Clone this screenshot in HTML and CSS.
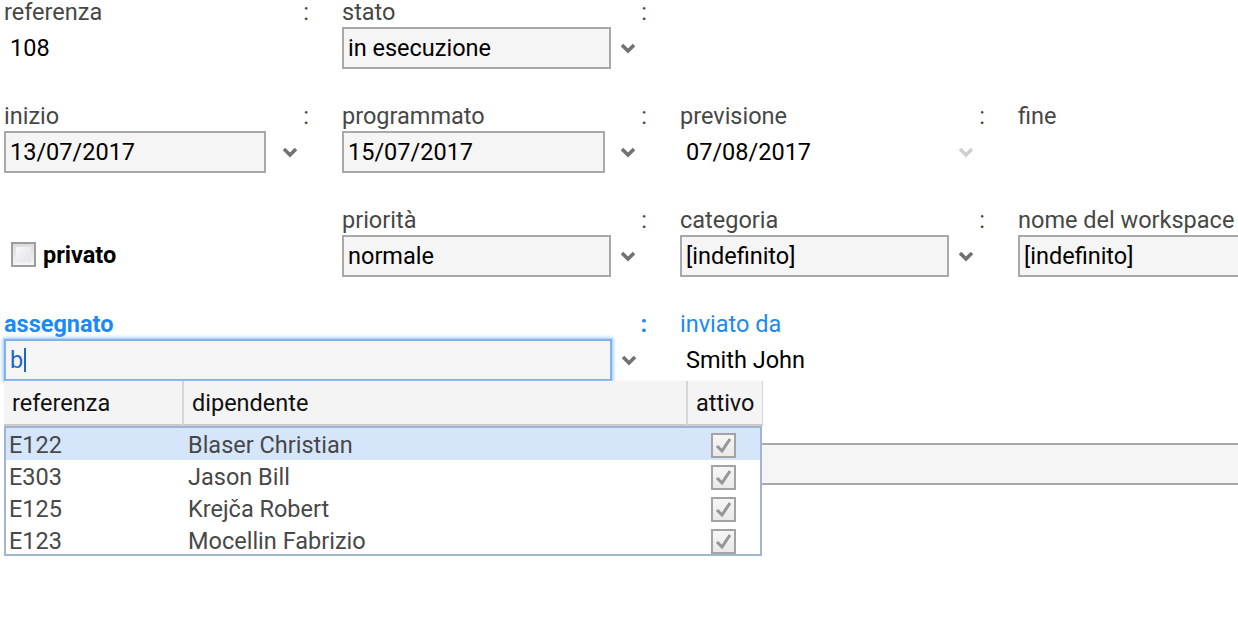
FILE: index.html
```html
<!DOCTYPE html>
<html lang="it">
<head>
<meta charset="utf-8">
<title>Attività</title>
<link rel="stylesheet" href="styles.css">
</head>
<body>
<div class="form">
  <div class="row">
    <div class="cell">
      <div class="lbl"><span>referenza</span><span>:</span></div>
      <div class="field"><span class="value">108</span></div>
    </div>
    <div class="cell">
      <div class="lbl"><span>stato</span><span>:</span></div>
      <div class="field"><div class="input w269">in esecuzione</div><svg class="chev" width="16" height="11" viewBox="0 0 16 11"><polyline points="2,2 8,8 14,2"/></svg></div>
    </div>
  </div>

  <div class="row">
    <div class="cell">
      <div class="lbl"><span>inizio</span><span>:</span></div>
      <div class="field"><div class="input w262">13/07/2017</div><svg class="chev" width="16" height="11" viewBox="0 0 16 11"><polyline points="2,2 8,8 14,2"/></svg></div>
    </div>
    <div class="cell">
      <div class="lbl"><span>programmato</span><span>:</span></div>
      <div class="field"><div class="input w263">15/07/2017</div><svg class="chev" width="16" height="11" viewBox="0 0 16 11"><polyline points="2,2 8,8 14,2"/></svg></div>
    </div>
    <div class="cell">
      <div class="lbl"><span>previsione</span><span>:</span></div>
      <div class="field"><span class="value">07/08/2017</span><svg class="chev light" width="16" height="11" viewBox="0 0 16 11"><polyline points="2,2 8,8 14,2"/></svg></div>
    </div>
    <div class="cell last">
      <div class="lbl"><span>fine</span></div>
    </div>
  </div>

  <div class="row">
    <div class="cell">
      <div class="lbl"></div>
      <div class="field check-field"><span class="cbox"><span class="cbox-in"></span></span><span class="check-label">privato</span></div>
    </div>
    <div class="cell">
      <div class="lbl"><span>priorità</span><span>:</span></div>
      <div class="field"><div class="input w269">normale</div><svg class="chev" width="16" height="11" viewBox="0 0 16 11"><polyline points="2,2 8,8 14,2"/></svg></div>
    </div>
    <div class="cell">
      <div class="lbl"><span>categoria</span><span>:</span></div>
      <div class="field"><div class="input w269">[indefinito]</div><svg class="chev" width="16" height="11" viewBox="0 0 16 11"><polyline points="2,2 8,8 14,2"/></svg></div>
    </div>
    <div class="cell last">
      <div class="lbl"><span>nome del workspace</span></div>
      <div class="field"><div class="input open">[indefinito]</div></div>
    </div>
  </div>

  <div class="row row-top">
    <div class="cell span2">
      <div class="lbl active"><span>assegnato</span><span>:</span></div>
      <div class="field"><div class="input focused w608"><span class="typed">b</span><span class="caret"></span></div><svg class="chev" width="16" height="11" viewBox="0 0 16 11"><polyline points="2,2 8,8 14,2"/></svg></div>
      <div class="dropdown">
        <div class="dd-head">
          <div class="dd-h">referenza</div>
          <div class="dd-h sep">dipendente</div>
          <div class="dd-h sep">attivo</div>
        </div>
        <div class="dd-body">
          <div class="dd-row sel"><span class="c1">E122</span><span class="c2">Blaser Christian</span><span class="c3"><span class="dis-box"><svg width="21" height="21" viewBox="0 0 21 21"><polyline points="4,11 9,16 17,4"/></svg></span></span></div>
          <div class="dd-row"><span class="c1">E303</span><span class="c2">Jason Bill</span><span class="c3"><span class="dis-box"><svg width="21" height="21" viewBox="0 0 21 21"><polyline points="4,11 9,16 17,4"/></svg></span></span></div>
          <div class="dd-row"><span class="c1">E125</span><span class="c2">Krejča Robert</span><span class="c3"><span class="dis-box"><svg width="21" height="21" viewBox="0 0 21 21"><polyline points="4,11 9,16 17,4"/></svg></span></span></div>
          <div class="dd-row"><span class="c1">E123</span><span class="c2">Mocellin Fabrizio</span><span class="c3"><span class="dis-box"><svg width="21" height="21" viewBox="0 0 21 21"><polyline points="4,11 9,16 17,4"/></svg></span></span></div>
        </div>
      </div>
    </div>
    <div class="cell">
      <div class="lbl blue"><span>inviato da</span></div>
      <div class="field"><span class="value">Smith John</span></div>
    </div>
  </div>

  <div class="row">
    <div class="cell full">
      <div class="lbl"></div>
      <div class="field"><div class="input open"></div></div>
    </div>
  </div>
</div>
</body>
</html>
```

FILE: styles.css
```css
html, body {
  margin: 0;
  padding: 0;
  overflow: hidden;
  background: #ffffff;
}

body {
  width: 1238px;
  height: 630px;
  font-family: Roboto, "Noto Sans", "Liberation Sans", sans-serif;
  font-size: 23.5px;
  color: #000000;
}

.form {
  padding-left: 4px;
  width: 1234px;
}

.row {
  display: grid;
  grid-template-columns: 338px 338px 338px 220px;
  height: 104px;
}

.row-top {
  position: relative;
  z-index: 2;
}

.cell {
  position: relative;
  min-width: 0;
}

.span2 {
  grid-column: span 2;
}

.full {
  grid-column: 1 / -1;
}

.lbl {
  width: 305px;
  height: 24px;
  line-height: 24px;
  display: flex;
  justify-content: space-between;
  color: #474747;
  white-space: nowrap;
}

.last .lbl {
  width: auto;
}

.span2 .lbl {
  width: 643px;
}

.lbl.active {
  color: #1b8af5;
  font-weight: bold;
}

.lbl.blue {
  color: #1b8af5;
}

.field {
  margin-top: 3px;
  height: 42px;
  display: grid;
  grid-template-columns: 272px 28px;
  align-items: center;
}

.span2 .field {
  grid-template-columns: 611px 28px;
}

.last .field,
.full .field {
  grid-template-columns: 100%;
}

.input {
  box-sizing: border-box;
  height: 42px;
  border: 2px solid #a9a9a9;
  background: #f5f5f5;
  padding: 0 4px;
  line-height: 38px;
  white-space: nowrap;
  overflow: hidden;
}

.w262 { width: 262px; }
.w263 { width: 263px; }
.w269 { width: 269px; }
.w608 { width: 608px; }

.input.open {
  width: 100%;
  border-right: 0;
}

.input.focused {
  border-color: #7fb2ee;
  box-shadow: 0 0 0 1px #b9d6f7, 0 0 4px 1px #93c2f4;
  display: flex;
  align-items: center;
}

.typed {
  color: #1e66cf;
}

.caret {
  display: inline-block;
  width: 2px;
  height: 24px;
  margin-left: 1px;
  background: #1e66cf;
}

.chev {
  justify-self: center;
  fill: none;
  stroke: #727272;
  stroke-width: 3.6;
}

.chev.light {
  stroke: #cfcfcf;
}

.value {
  padding-left: 6px;
  line-height: 42px;
  white-space: nowrap;
}

.check-field {
  display: flex;
  align-items: center;
  padding-left: 7px;
  margin-top: 0;
  height: 45px;
}

.cbox {
  box-sizing: border-box;
  width: 25px;
  height: 25px;
  border: 2px solid #9d9d9d;
  background: linear-gradient(#dcdcdc, #f4f4f4);
  display: flex;
  align-items: center;
  justify-content: center;
}

.cbox-in {
  width: 15px;
  height: 15px;
  background: linear-gradient(135deg, #f7f7f7, #e2e4e8);
}

.check-label {
  margin-left: 7px;
  font-weight: bold;
}

/* dropdown */
.dropdown {
  position: absolute;
  left: 0;
  top: 69px;
  width: 758px;
  background: #ffffff;
  z-index: 5;
}

.dd-head {
  display: grid;
  grid-template-columns: 178px 504px 1fr;
  height: 43px;
  background: #f4f4f4;
  border-bottom: 2px solid #cacaca;
  box-shadow: 1px 0 1px #d8d8d8;
}

.dd-h {
  padding-left: 8px;
  line-height: 44px;
  color: #111111;
}

.dd-h.sep {
  border-left: 2px solid #d6d6d6;
}

.dd-body {
  box-sizing: border-box;
  height: 130px;
  overflow: hidden;
  border: 2px solid #9fb5d2;
  background: #ffffff;
}

.dd-row {
  display: grid;
  grid-template-columns: 176px 504px 1fr;
  height: 32px;
  line-height: 34px;
  color: #484848;
}

.dd-row.sel {
  background: #d5e6fb;
}

.c1 {
  padding-left: 3px;
}

.c2 {
  padding-left: 6px;
}

.c3 {
  display: flex;
  align-items: center;
  justify-content: center;
}

.dis-box {
  box-sizing: border-box;
  width: 25px;
  height: 25px;
  border: 2px solid #a3a3a3;
  background: linear-gradient(#f6f6f6, #e9e9e9);
  display: flex;
}

.dis-box svg {
  fill: none;
  stroke: #959595;
  stroke-width: 3;
}
```
